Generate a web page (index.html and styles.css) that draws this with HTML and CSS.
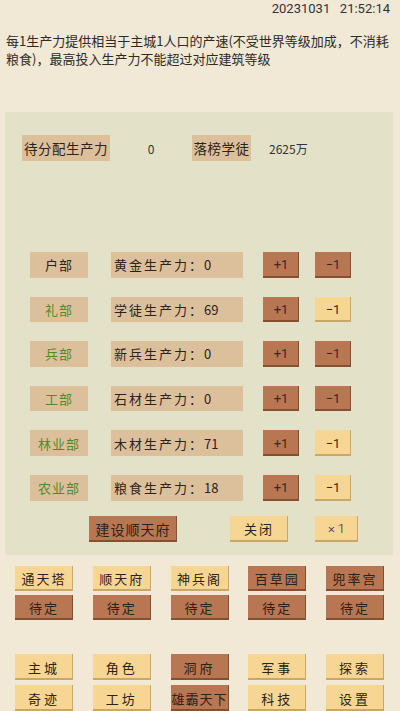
FILE: index.html
```html
<!DOCTYPE html>
<html lang="zh-CN">
<head>
  <meta charset="UTF-8">
  <meta name="viewport" content="width=device-width, initial-scale=1.0">
  <title>顺天府</title>
  <link rel="stylesheet" href="styles.css">
</head>
<body>

<div class="clock">20231031&nbsp;&nbsp;&nbsp;21:52:14</div>

<p class="desc">每1生产力提供相当于主城1人口的产速(不受世界等级加成，不消耗粮食)，最高投入生产力不能超过对应建筑等级</p>

<div class="panel">
  <div class="stats">
    <div class="tag tag-wide">待分配生产力</div>
    <div class="stat-num">0</div>
    <div class="tag tag-mid">落榜学徒</div>
    <div class="stat-num stat-left">2625万</div>
  </div>

  <div class="depts">
    <div class="dept">
      <div class="tag dept-name">户部</div>
      <div class="tag dept-value">黄金生产力：<span class="num">0</span></div>
      <button class="btn btn-dark btn-step">+1</button>
      <button class="btn btn-dark btn-step">−1</button>
    </div>
    <div class="dept">
      <div class="tag dept-name green">礼部</div>
      <div class="tag dept-value">学徒生产力：<span class="num">69</span></div>
      <button class="btn btn-dark btn-step">+1</button>
      <button class="btn btn-light btn-step">−1</button>
    </div>
    <div class="dept">
      <div class="tag dept-name green">兵部</div>
      <div class="tag dept-value">新兵生产力：<span class="num">0</span></div>
      <button class="btn btn-dark btn-step">+1</button>
      <button class="btn btn-dark btn-step">−1</button>
    </div>
    <div class="dept">
      <div class="tag dept-name green">工部</div>
      <div class="tag dept-value">石材生产力：<span class="num">0</span></div>
      <button class="btn btn-dark btn-step">+1</button>
      <button class="btn btn-dark btn-step">−1</button>
    </div>
    <div class="dept">
      <div class="tag dept-name green">林业部</div>
      <div class="tag dept-value">木材生产力：<span class="num">71</span></div>
      <button class="btn btn-dark btn-step">+1</button>
      <button class="btn btn-light btn-step">−1</button>
    </div>
    <div class="dept">
      <div class="tag dept-name green">农业部</div>
      <div class="tag dept-value">粮食生产力：<span class="num">18</span></div>
      <button class="btn btn-dark btn-step">+1</button>
      <button class="btn btn-light btn-step">−1</button>
    </div>
  </div>

  <div class="panel-actions">
    <button class="btn btn-dark btn-build">建设顺天府</button>
    <button class="btn btn-light btn-close">关闭</button>
    <button class="btn btn-light btn-speed">× 1</button>
  </div>
</div>

<div class="grid buildings">
  <button class="btn btn-light">通天塔</button>
  <button class="btn btn-light">顺天府</button>
  <button class="btn btn-light">神兵阁</button>
  <button class="btn btn-dark">百草园</button>
  <button class="btn btn-dark">兜率宫</button>
  <button class="btn btn-dark">待定</button>
  <button class="btn btn-dark">待定</button>
  <button class="btn btn-dark">待定</button>
  <button class="btn btn-dark">待定</button>
  <button class="btn btn-dark">待定</button>
</div>

<div class="grid nav">
  <button class="btn btn-light">主城</button>
  <button class="btn btn-light">角色</button>
  <button class="btn btn-dark">洞府</button>
  <button class="btn btn-light">军事</button>
  <button class="btn btn-light">探索</button>
  <button class="btn btn-light">奇迹</button>
  <button class="btn btn-light">工坊</button>
  <button class="btn btn-dark">雄霸天下</button>
  <button class="btn btn-light">科技</button>
  <button class="btn btn-light">设置</button>
</div>

</body>
</html>
```

FILE: styles.css
```css
:root {
  --page: #f1e8d6;
  --panel: #e3e2c9;
  --tan: #dcc09c;
  --dark: #b87652;
  --dark-edge: #85502f;
  --light: #f7d693;
  --light-edge: #c9a766;
  --ink: #2b2219;
  --green: #4f8a2b;
}
* {
  box-sizing: border-box;
}
body {
  margin: 0;
  width: 400px;
  height: 711px;
  overflow: hidden;
  background: var(--page);
  color: var(--ink);
  font-family: "Noto Sans CJK SC", "Noto Sans", sans-serif;
}
.clock {
  height: 18px;
  padding: 0 10px 0 0;
  text-align: right;
  font-family: Roboto, "Noto Sans", sans-serif;
  font-size: 13px;
  line-height: 18px;
  color: #333;
}
.desc {
  margin: 14px 0 0;
  padding: 0 6px;
  font-size: 13px;
  line-height: 18px;
  color: #2e2a24;
}
.panel {
  position: absolute;
  top: 112px;
  left: 5px;
  width: 388px;
  height: 443px;
  background: var(--panel);
}
.tag {
  display: flex;
  align-items: center;
  white-space: nowrap;
  background: var(--tan);
  font-size: 13px;
  letter-spacing: 2px;
}
.stats {
  display: flex;
  align-items: center;
  height: 26px;
  margin: 23px 0 0 17px;
}
.tag-wide {
  width: 88px;
  height: 26px;
  justify-content: center;
  font-size: 13.5px;
  letter-spacing: 0.5px;
}
.tag-mid {
  width: 59px;
  height: 26px;
  justify-content: center;
  font-size: 13.5px;
  letter-spacing: 0.5px;
}
.stat-num {
  width: 82px;
  text-align: center;
  font-size: 12px;
  color: #333;
}
.stat-left {
  width: auto;
  margin-left: 18px;
}
.depts {
  display: flex;
  flex-direction: column;
  gap: 19px;
  margin: 91px 0 0 25px;
}
.dept {
  display: flex;
  height: 25.6px;
}
.dept-name {
  width: 58px;
  justify-content: center;
  letter-spacing: 1px;
}
.dept-value {
  width: 132px;
  margin-left: 23px;
  padding-left: 3px;
  letter-spacing: 2px;
}
.num {
  letter-spacing: 0;
}
.green {
  color: var(--green);
}
.btn {
  border: none;
  padding: 0;
  margin: 0;
  font-family: inherit;
  font-size: 13px;
  letter-spacing: 2px;
  color: var(--ink);
  cursor: pointer;
}
.btn-dark {
  background: var(--dark);
  box-shadow: inset -1px -2px 0 var(--dark-edge);
}
.btn-light {
  background: var(--light);
  box-shadow: inset -1px -2px 0 var(--light-edge);
}
.btn-step {
  width: 36px;
  margin-left: 16px;
  font-family: Roboto, "Noto Sans", sans-serif;
  font-size: 13px;
  letter-spacing: 0;
  color: #3a2a1c;
}
.dept .btn-step:first-of-type {
  margin-left: 20px;
}
.panel-actions {
  display: flex;
  height: 26px;
  margin: 15px 0 0 84px;
}
.btn-build {
  width: 88px;
  font-size: 14px;
  letter-spacing: 1px;
}
.btn-close {
  width: 58px;
  margin-left: 53px;
}
.btn-speed {
  width: 43px;
  margin-left: 27px;
  font-family: Roboto, "Noto Sans", sans-serif;
  font-weight: 300;
  letter-spacing: 0;
}
.grid {
  position: absolute;
  left: 15px;
  display: grid;
  grid-template-columns: repeat(5, 58px);
  column-gap: 19.75px;
  row-gap: 5px;
}
.grid .btn {
  height: 25px;
}
.buildings {
  top: 566px;
  row-gap: 4px;
}
.nav {
  top: 654px;
}
.nav .btn {
  height: 26px;
  letter-spacing: 3px;
}
.nav .btn:nth-child(8) {
  letter-spacing: 1px;
}
```
